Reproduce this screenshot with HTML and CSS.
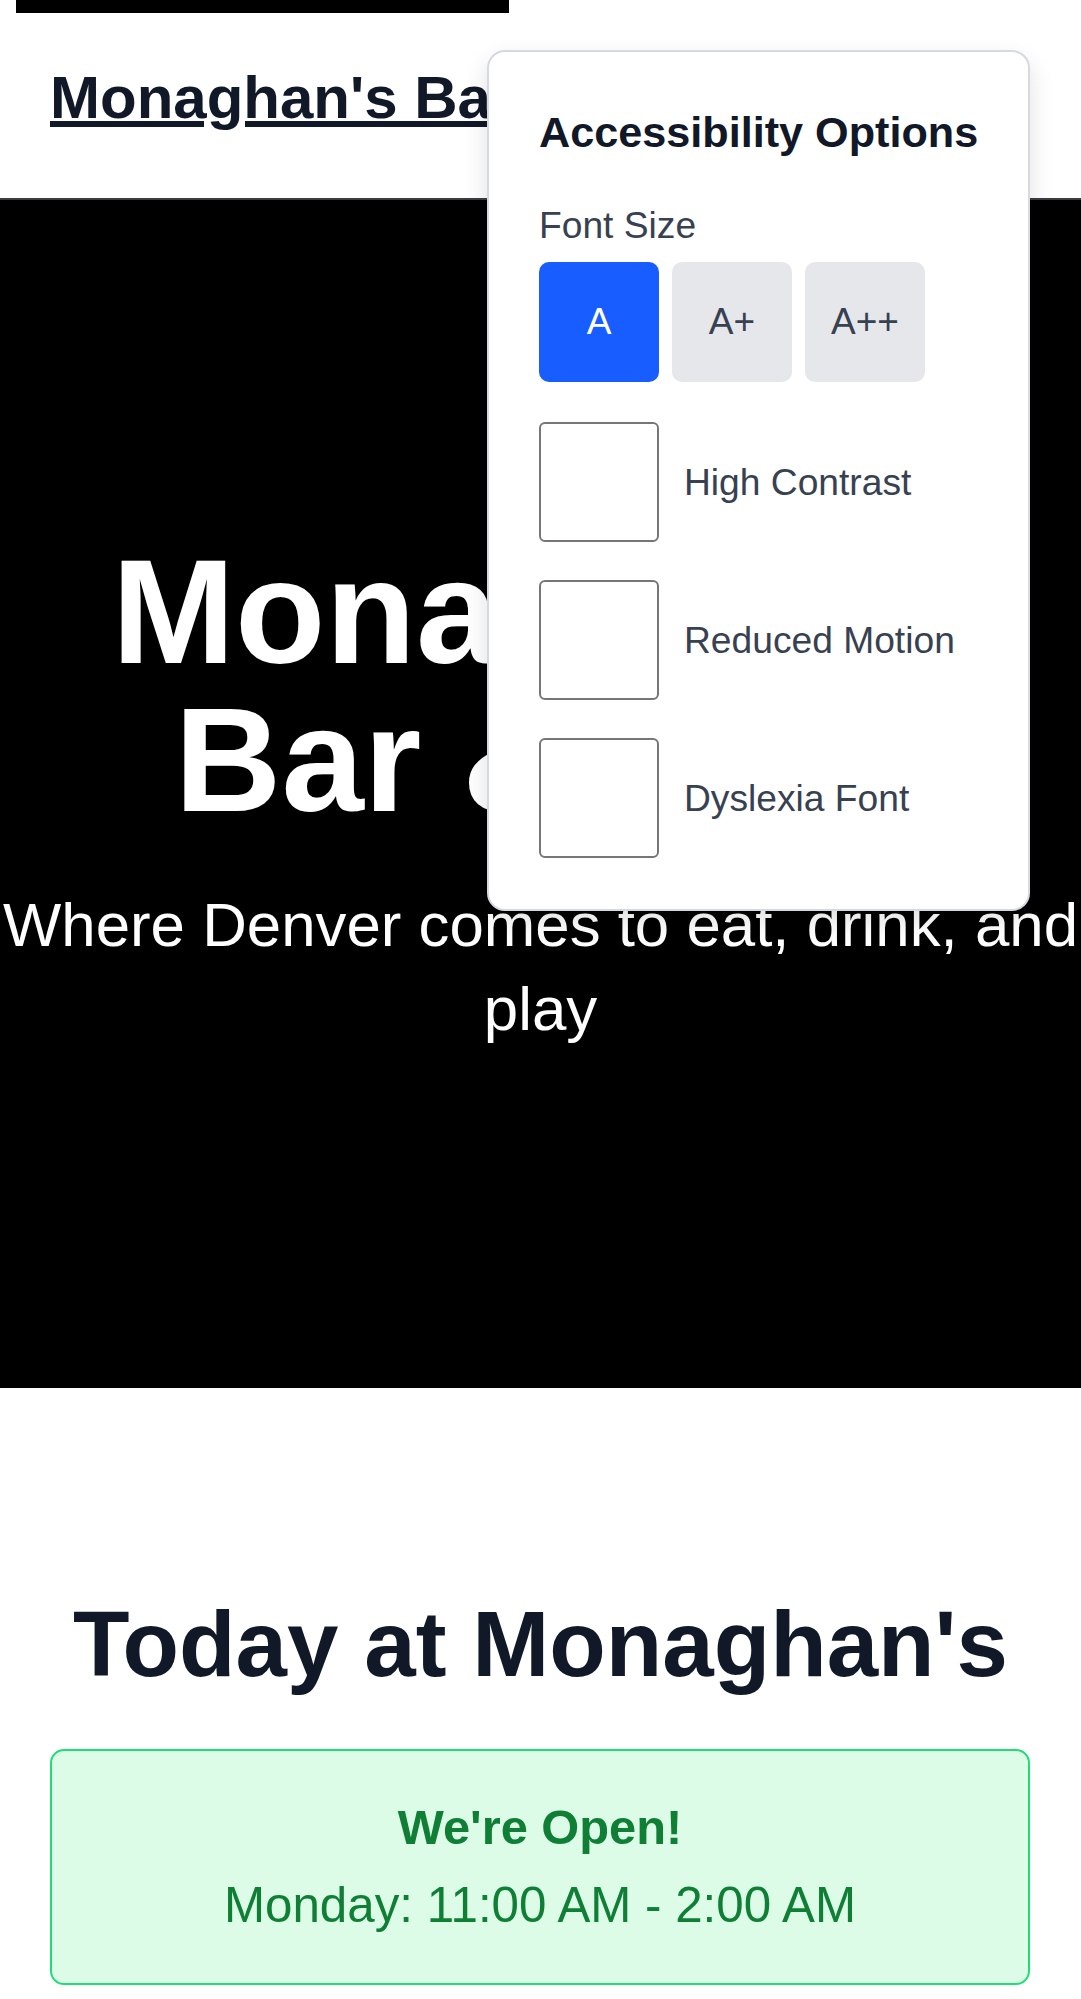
FILE: index.html
```html
<!DOCTYPE html>
<html lang="en">
<head>
<meta charset="utf-8">
<title>Monaghan's Bar &amp; Grill</title>
<link rel="stylesheet" href="styles.css">
</head>
<body>
  <a class="skip-link" href="#main">Skip to main content</a>

  <header class="site-header">
    <a class="brand" href="#">Monaghan's Bar &amp; Grill</a>
  </header>

  <div class="a11y-panel" role="dialog" aria-label="Accessibility Options">
    <h2 class="a11y-title">Accessibility Options</h2>
    <div class="a11y-label">Font Size</div>
    <div class="size-row">
      <button class="size-btn active">A</button>
      <button class="size-btn">A+</button>
      <button class="size-btn">A++</button>
    </div>
    <div class="toggle-list">
      <label class="toggle-row"><span class="box"></span><span class="toggle-text">High Contrast</span></label>
      <label class="toggle-row"><span class="box"></span><span class="toggle-text">Reduced Motion</span></label>
      <label class="toggle-row"><span class="box"></span><span class="toggle-text">Dyslexia Font</span></label>
    </div>
  </div>

  <main id="main">
    <section class="hero">
      <h1 class="hero-title">Monaghan's Bar &amp; Grill</h1>
      <p class="hero-sub">Where Denver comes to eat, drink, and play</p>
    </section>

    <section class="today">
      <h2 class="today-title">Today at Monaghan's</h2>
      <div class="status-box">
        <div class="status-head">We're Open!</div>
        <div class="status-hours">Monday: 11:00 AM - 2:00 AM</div>
      </div>
    </section>
  </main>
</body>
</html>
```

FILE: styles.css
```css
* {
  box-sizing: border-box;
}

html, body {
  margin: 0;
  padding: 0;
  background: #ffffff;
}

body {
  position: relative;
  font-family: "Liberation Sans", Arial, sans-serif;
  color: #111827;
  overflow-x: hidden;
}

.skip-link {
  position: absolute;
  left: 16px;
  top: -47px;
  width: 493px;
  height: 60px;
  background: #000;
  color: #fff;
  font-size: 28px;
  line-height: 40px;
  padding: 2px 12px 0;
  text-decoration: none;
  z-index: 5;
}

.site-header {
  padding: 62px 48px 64px 50px;
  border-bottom: 2px solid #3b3b40;
  background: #fff;
}

.brand {
  display: inline-block;
  font-size: 60px;
  line-height: 72px;
  font-weight: 700;
  color: #111827;
  text-decoration: underline;
}

.a11y-panel {
  position: absolute;
  left: 487px;
  top: 50px;
  width: 543px;
  background: #fff;
  border: 2px solid #d5d9e0;
  border-radius: 18px;
  box-shadow: 0 10px 24px rgba(0, 0, 0, 0.12);
  padding: 52px 50px 51px;
  z-index: 10;
}

.a11y-title {
  margin: 0 0 38px;
  font-size: 43.2px;
  line-height: 56px;
  font-weight: 700;
  color: #111827;
  white-space: nowrap;
}

.a11y-label {
  font-size: 37.2px;
  line-height: 54px;
  color: #374151;
}

.size-row {
  display: flex;
  gap: 13px;
  margin-top: 10px;
}

.size-btn {
  width: 120px;
  height: 120px;
  border: none;
  border-radius: 10px;
  background: #e5e7eb;
  color: #374151;
  font-family: "Liberation Sans", Arial, sans-serif;
  font-size: 37px;
  padding: 0;
}

.size-btn.active {
  background: #175dff;
  color: #fff;
}

.toggle-list {
  display: flex;
  flex-direction: column;
  gap: 38px;
  margin-top: 40px;
}

.toggle-row {
  display: flex;
  align-items: center;
  gap: 25px;
}

.box {
  width: 120px;
  height: 120px;
  border: 2px solid #767676;
  border-radius: 6px;
  background: #fff;
  flex: none;
}

.toggle-text {
  font-size: 37.2px;
  line-height: 54px;
  color: #374151;
  white-space: nowrap;
}

.hero {
  height: 1188px;
  background: #000;
  color: #fff;
  display: flex;
  flex-direction: column;
  justify-content: center;
  align-items: center;
  text-align: center;
}

.hero-title {
  margin: 0;
  font-size: 148px;
  line-height: 148px;
  font-weight: 700;
  padding: 0 48px;
}

.hero-sub {
  margin: 49px 0 0;
  font-size: 61.8px;
  line-height: 84px;
}

.today {
  padding-top: 204px;
}

.today-title {
  margin: 0 0 53px;
  text-align: center;
  font-size: 92.5px;
  line-height: 104px;
  font-weight: 700;
  color: #111827;
}

.status-box {
  margin: 0 51px 0 50px;
  border: 2px solid #22dd77;
  border-radius: 14px;
  background: #dcfce7;
  padding: 37px 0 39px;
  text-align: center;
  color: #0f7f36;
}

.status-head {
  font-size: 48.8px;
  line-height: 78px;
  font-weight: 700;
}

.status-hours {
  font-size: 49.3px;
  line-height: 78px;
}
```
